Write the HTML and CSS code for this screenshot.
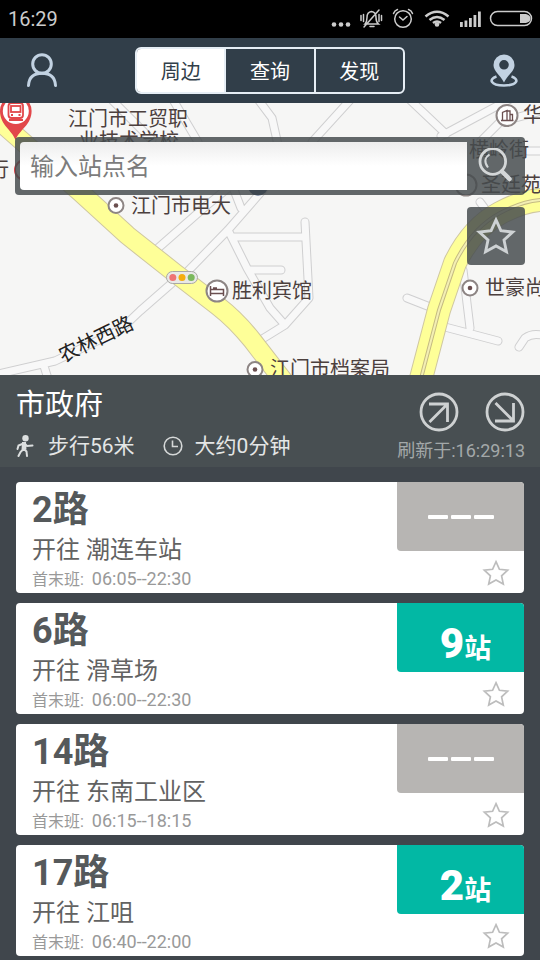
FILE: index.html
```html
<!DOCTYPE html>
<html lang="zh-CN">
<head>
<meta charset="utf-8">
<meta name="viewport" content="width=device-width, initial-scale=1">
<title>市政府</title>
<link rel="stylesheet" href="styles.css">
</head>
<body>
<svg class="defs" aria-hidden="true">
  <symbol id="star" viewBox="0 0 36 36"><path d="M18 3.500 22.400 13.200 33 14.400 25.200 21.600 27.400 32.200 18 27 8.600 32.200 10.800 21.600 3 14.400 13.600 13.200Z" fill="none" stroke="currentColor"/></symbol>
</svg>

<div class="status">
  <span class="clock">16:29</span>
  <svg class="status-icons" viewBox="0 0 204 28" aria-hidden="true">
    <g fill="#ccc">
      <circle cx="4" cy="19.500" r="2.300"/><circle cx="11" cy="19.500" r="2.300"/><circle cx="18" cy="19.500" r="2.300"/>
      <circle cx="107" cy="19.500" r="2.300"/>
      <rect x="130" y="17" width="2.800" height="5"/><rect x="134.500" y="15.500" width="2.800" height="6.500"/><rect x="139" y="13" width="2.800" height="9"/><rect x="143.500" y="10" width="2.800" height="12"/><rect x="148" y="6.500" width="2.800" height="15.500"/>
      <path d="M190 9h6q4.500 1 4.500 4.500t-4.500 4.500h-6z"/>
    </g>
    <g fill="none" stroke="#ccc" stroke-width="1.500" stroke-linecap="round">
      <path d="M35 19q2-2 2-6.500 0-5.500 4.500-6 4.500.5 4.500 6 0 4.500 2.500 6.500zM40 21.500h4M34 22 49 5M31 10.500v5M51.500 10.500v5M33.500 9.500v7M49 9.500v7"/>
      <circle cx="73" cy="14" r="8.300"/><path d="M69.500 12 73 15l4-3.500M63.500 8.500q1-3 4-4M82.500 8.500q-1-3-4-4" />
      <rect x="160.500" y="6.500" width="41" height="14" rx="7"/>
    </g>
    <g fill="none" stroke="#ccc" stroke-width="2.600">
      <path d="M95.500 11.500q11.500-9.500 23 0M99.500 15q7.500-6 15 0M103 18q4-3 8 0"/>
    </g>
  </svg>
</div>

<header class="topbar">
  <button class="icon-button profile" type="button" aria-label="我的">
    <svg viewBox="0 0 36 36" width="36" height="36" fill="none" stroke="#c2d2e2" stroke-width="3" stroke-linecap="round"><circle cx="18" cy="11" r="9.300"/><path d="M4.500 32.500C5 24 10 20.300 18 20.300S31 24 31.500 32.500"/></svg>
  </button>
  <nav class="tabs">
    <button class="tab active" type="button">周边</button>
    <button class="tab" type="button">查询</button>
    <button class="tab" type="button">发现</button>
  </nav>
  <button class="icon-button locate" type="button" aria-label="定位">
    <svg viewBox="0 0 36 36" width="36" height="36"><path fill="#c2d2e2" fill-rule="evenodd" d="M18 1.500a10.500 10.500 0 0 0-10.500 10.500C7.500 18.500 14 21.500 18 29.500c4-8 10.500-11 10.500-17.500A10.500 10.500 0 0 0 18 1.500zm0 5.500a4.800 4.800 0 1 1 0 9.600 4.800 4.800 0 0 1 0-9.600z"/><path d="M10.500 23.500C2.500 26 4 32.500 18 32.500s15.500-6.500 7.500-9" fill="none" stroke="#c2d2e2" stroke-width="2.600"/></svg>
  </button>
</header>

<main>
<section class="map-area">
  <svg class="map" viewBox="0 103 540 272" preserveAspectRatio="xMidYMid slice" role="img" aria-label="地图">
    <defs>
      <g id="streets" fill="none" stroke-linecap="round" stroke-linejoin="round">
        <path d="M110 98 152 140M172 98 198 142M257 98 272 118 278 145M352 98 312 142M408 98 446 134M441 136Q480 115 512 98M480 142 500 122 545 110M528 151H550"/>
        <path d="M157 249 206 206 228 188M234 190 241 208M187 272 228 230 268 184M228 230 247 268 270 308 285 325M250 270H281M232 237H305M305 222 309 298 285 325 259 341"/>
        <path d="M172 283 140 311 120 330 55 361 -10 376M44 366 50 385M407 298 430 307M463 270 470 328M445 327 498 341M519 347 525 338Q533 332 545 336M480 202 492 218"/>
      </g>
      <path id="avenue" fill="none" d="M-10 113 80 192 127 235 175 273 218 306Q236 320 252 340L286 384"/>
      <path id="ring-road" fill="none" d="M418 390 439 310 455 263Q472 228 500 213T550 200"/>
    </defs>
    <rect y="103" width="540" height="272" fill="#f6f6f5"/>
    <g class="street-edge"><use href="#streets"/></g>
    <g class="street-fill"><use href="#streets"/></g>
    <g class="avenue-edge"><use href="#avenue"/></g>
    <g class="avenue-fill"><use href="#avenue"/></g>
    <g class="ring-edge"><use href="#ring-road"/></g>
    <g class="ring-fill"><use href="#ring-road"/></g>
    <g class="ring-mid"><use href="#ring-road"/></g>
    <g class="ring-gap"><use href="#ring-road"/></g>

    <g class="poi">
      <circle cx="116" cy="205.500" r="7.500"/><circle cx="470" cy="288" r="7.500"/><circle cx="255" cy="369.500" r="7.500"/>
      <circle cx="217" cy="291" r="10.500"/><circle cx="507" cy="115.500" r="10.500"/><circle cx="466" cy="185" r="10.500"/>
    </g>
    <g fill="#6b4f50">
      <circle cx="116" cy="205.500" r="2.300"/><circle cx="470" cy="288" r="2.300"/><circle cx="255" cy="369.500" r="2.300"/>
    </g>
    <path d="M210.500 286v10M210.500 293.500h13v2.500M223.500 294v-4.500h-13M213 288h4" fill="none" stroke="#6b4f50" stroke-width="1.500"/>
    <path d="M502.500 120v-7.500l4.500-2V120M507 111h3v9M510 114.500h2.500v5.500M501 120.500h12.500" fill="none" stroke="#6b4f50" stroke-width="1.300"/>
    <circle cx="258" cy="185" r="10.500" fill="#1d3766"/>
    <circle cx="25" cy="170" r="10" fill="#fff" stroke="#d43d45" stroke-width="2"/>
    <g>
      <rect x="166.500" y="271.500" width="31" height="12" rx="6" fill="#e9e9e7" stroke="#aaa9a5"/>
      <circle cx="172.800" cy="277.500" r="3.500" fill="#ef7474"/><circle cx="182" cy="277.500" r="3.500" fill="#f4ae10"/><circle cx="191.200" cy="277.500" r="3.500" fill="#7bb95c"/>
    </g>
    <path d="M15.500 140C12 130 0 125 0 111A15.800 15.800 0 0 1 31.600 111C31.600 125 19 130 15.500 140Z" fill="#e2474a"/>
    <circle cx="15.800" cy="111" r="13" fill="#fff"/>
    <g fill="none" stroke="#e2474a" stroke-width="1.800"><rect x="8.500" y="103" width="14.500" height="15" rx="3"/><rect x="11" y="106" width="9.500" height="6"/><path d="M11 115h2M18.500 115h2M9 120h14"/></g>

    <g class="map-label">
      <text x="68" y="126">江门市工贸职</text>
      <text x="79" y="148">业技术学校</text>
      <text x="131" y="213">江门市电大</text>
      <text x="232" y="298">胜利宾馆</text>
      <text x="270" y="376">江门市档案局</text>
      <text x="485" y="295">世豪尚</text>
      <text x="523" y="122">华</text>
      <text x="469" y="157">横岭街</text>
      <text x="481" y="192">圣廷苑</text>
      <text x="-11" y="177">行</text>
      <text class="road-name" x="63" y="363" transform="rotate(-26 63 363)">农林西路</text>
    </g>
  </svg>
  <div class="map-tools">
    <form class="search">
      <input class="search-input" type="text" placeholder="输入站点名" aria-label="输入站点名">
      <button class="tool" type="button" aria-label="搜索">
        <svg viewBox="0 0 36 36" width="36" height="36" fill="none" stroke="#d4d7d8"><circle cx="14.800" cy="13.500" r="12.800" stroke-width="2.800"/><path d="M24 23.500 31.500 31" stroke-width="4.500" stroke-linecap="round"/><path d="M11.500 6.500Q4 11.500 10 19.500" stroke-width="2"/></svg>
      </button>
    </form>
    <button class="tool favourite" type="button" aria-label="收藏"><svg width="40" height="40"><use href="#star"/></svg></button>
  </div>
</section>

<section class="stop">
  <div class="stop-info">
    <h1>市政府</h1>
    <div class="walk">
      <svg viewBox="0 0 18 22" width="18" height="22" aria-hidden="true"><circle cx="9.500" cy="3.300" r="3.200" fill="#dcdfdf"/><path d="M7.500 8 7 14M7.500 8.500 2.500 10.500 1.500 14M8.500 8.500 11 11 16.500 10.500M7.500 14 4.500 17 2.500 21M8 14 10.500 16.500 11 21" fill="none" stroke="#dcdfdf" stroke-width="2" stroke-linecap="round"/><path d="M6 7h4l.5 7.500H5.500z" fill="#dcdfdf"/></svg>
      <span class="distance">步行56米</span>
      <svg viewBox="0 0 20 20" width="20" height="20" fill="none" stroke="#d5d8d8" stroke-width="1.600" aria-hidden="true"><circle cx="10" cy="10" r="8.800"/><path d="M9.500 4.500V10.500H15"/></svg>
      <span class="time">大约0分钟</span>
    </div>
  </div>
  <div class="stop-side">
    <div class="directions">
      <button class="direction" type="button" aria-label="上行"><svg viewBox="0 0 40 40" width="40" height="40" fill="none" stroke="#ced1d2" stroke-width="2.800"><circle cx="20" cy="20" r="18"/><path d="M10 12h18.500v18M28 12.500 10.500 30"/></svg></button>
      <button class="direction" type="button" aria-label="下行"><svg viewBox="0 0 40 40" width="40" height="40" fill="none" stroke="#ced1d2" stroke-width="2.800"><circle cx="20" cy="20" r="18"/><path d="M10 29h18.500V11M28 28.500 10.500 11"/></svg></button>
    </div>
    <span class="refreshed">刷新于:16:29:13</span>
  </div>
</section>

<ul class="routes">
  <li class="route">
    <div class="route-info"><h2>2路</h2><p class="towards">开往 潮连车站</p><p class="hours"><span>首末班: &nbsp;</span>06:05--22:30</p></div>
    <div class="route-side"><div class="badge idle" role="img" aria-label="暂无车辆"><i></i><i></i><i></i></div><button class="save" type="button" aria-label="收藏"><svg width="28" height="28"><use href="#star"/></svg></button></div>
  </li>
  <li class="route">
    <div class="route-info"><h2>6路</h2><p class="towards">开往 滑草场</p><p class="hours"><span>首末班: &nbsp;</span>06:00--22:30</p></div>
    <div class="route-side"><div class="badge"><b>9</b><span>站</span></div><button class="save" type="button" aria-label="收藏"><svg width="28" height="28"><use href="#star"/></svg></button></div>
  </li>
  <li class="route">
    <div class="route-info"><h2>14路</h2><p class="towards">开往 东南工业区</p><p class="hours"><span>首末班: &nbsp;</span>06:15--18:15</p></div>
    <div class="route-side"><div class="badge idle" role="img" aria-label="暂无车辆"><i></i><i></i><i></i></div><button class="save" type="button" aria-label="收藏"><svg width="28" height="28"><use href="#star"/></svg></button></div>
  </li>
  <li class="route">
    <div class="route-info"><h2>17路</h2><p class="towards">开往 江咀</p><p class="hours"><span>首末班: &nbsp;</span>06:40--22:00</p></div>
    <div class="route-side"><div class="badge"><b>2</b><span>站</span></div><button class="save" type="button" aria-label="收藏"><svg width="28" height="28"><use href="#star"/></svg></button></div>
  </li>
</ul>
</main>
</body>
</html>
```
FILE: styles.css
```css
* { box-sizing: border-box; }

body {
  margin: 0;
  background: #40464c;
  font-family: Roboto, "Noto Sans CJK SC", sans-serif;
  color: #55595b;
}

h1, h2, p, ul { margin: 0; padding: 0; }

svg { display: block; }

button {
  padding: 0;
  border: 0;
  background: none;
  font: inherit;
  color: inherit;
}

.defs { position: absolute; width: 0; height: 0; }

.status {
  display: flex;
  align-items: center;
  justify-content: space-between;
  height: 38px;
  padding: 0 6px 0 8px;
  background: #000;
  color: #ccc;
}

.clock { font-size: 20px; }
.status-icons { width: 204px; height: 28px; }

.topbar {
  display: grid;
  grid-template-columns: 1fr 5fr 1fr;
  column-gap: 20px;
  align-items: center;
  height: 65px;
  padding: 0 18px 0 24px;
  background: #313e49;
}

.locate { justify-self: end; }

/* Keep the tab group centred between the two icons. */
.topbar {
  grid-template-columns: 1fr minmax(0, 270px) 1fr;
  padding: 0 18px;
}

.profile { padding-left: 6px; justify-self: start; }

.tabs {
  display: flex;
  height: 47px;
  border: 2px solid #e6eef5;
  border-radius: 6px;
  overflow: hidden;
}

.tab {
  flex: 1;
  font-size: 20px;
  color: #fff;
}

.tab + .tab { border-left: 2px solid #e6eef5; }
.tab.active { background: #fff; color: #313e49; }

.map-area {
  position: relative;
  height: 272px;
  overflow: hidden;
}

.map {
  position: absolute;
  inset: 0;
  width: 100%;
  height: 100%;
}

.street-edge { stroke: #cfcfd0; stroke-width: 9; }
.street-fill { stroke: #f8f8f8; stroke-width: 7; }
.avenue-edge { stroke: #cfc7a0; stroke-width: 20; }
.avenue-fill { stroke: #feff98; stroke-width: 18; }
.ring-edge { stroke: #cfc7a0; stroke-width: 24; }
.ring-fill { stroke: #feff98; stroke-width: 22; }
.ring-mid { stroke: #c4ba82; stroke-width: 4; }
.ring-gap { stroke: #f3efb4; stroke-width: 2; }
.poi { fill: #fff; stroke: #8d8584; stroke-width: 2; }
.map-label { font-size: 20px; fill: #4c403e; }
.road-name { fill: #222; }

.map-tools {
  position: relative;
  display: flex;
  flex-direction: column;
  align-items: flex-end;
  gap: 12px;
  padding: 34px 15px 0;
}

.search {
  display: flex;
  align-items: center;
  width: 100%;
  height: 58px;
  padding-left: 5px;
  border-radius: 4px;
  background: rgba(69, 75, 78, .84);
}

.search-input {
  flex: 1;
  min-width: 0;
  height: 48px;
  padding: 2px 10px 0;
  border: 0;
  border-radius: 4px 0 0 4px;
  background: linear-gradient(#ededed, #fff 50%);
  font: inherit;
  font-size: 24px;
  color: #444;
}

.search-input::placeholder { color: #7c7c7c; opacity: 1; }

.tool {
  display: grid;
  place-items: center;
  width: 58px;
  height: 58px;
}

.favourite {
  border-radius: 4px;
  background: rgba(69, 75, 78, .84);
  color: #ced2d4;
  stroke-width: 2.6px;
}

.stop {
  display: flex;
  justify-content: space-between;
  height: 92px;
  padding: 9px 15px 0 16px;
  background: #484f52;
  color: #e4e6e6;
}

.stop h1 {
  font-size: 29px;
  font-weight: 400;
  line-height: 42px;
  color: #fff;
}

.walk {
  display: flex;
  align-items: center;
  font-size: 21px;
  line-height: 40px;
}

.distance { margin: 0 28px 0 14px; }
.time { margin-left: 12px; }

.stop-side {
  display: flex;
  flex-direction: column;
  align-items: flex-end;
  padding-top: 8px;
}

.directions { display: flex; gap: 26px; }

.refreshed {
  font-size: 18px;
  line-height: 38px;
  color: #a3a8a9;
}

.routes {
  display: flex;
  flex-direction: column;
  gap: 10px;
  padding: 15px 16px 4px;
  list-style: none;
}

.route {
  display: flex;
  justify-content: space-between;
  height: 111px;
  border-radius: 4px;
  background: #fff;
  overflow: hidden;
}

.route-info { padding: 7px 0 0 16px; }

.route h2 {
  font-size: 36px;
  font-weight: 700;
  line-height: 42px;
}

.towards {
  font-size: 24px;
  line-height: 38px;
  color: #626262;
}

.hours {
  font-size: 18px;
  line-height: 20px;
  color: #999;
}

.hours span { font-size: 16px; }

.route-side {
  display: flex;
  flex-direction: column;
  align-items: flex-end;
  width: 25%;
}

.badge {
  display: flex;
  align-items: baseline;
  justify-content: center;
  width: 100%;
  height: 69px;
  padding: 16px 0 0 10px;
  border-radius: 0 0 0 4px;
  background: #02b8a4;
  color: #fff;
  font-weight: 700;
}

.badge b { font-size: 42px; line-height: 50px; }
.badge span { font-size: 27px; line-height: 50px; }

.badge.idle {
  align-items: center;
  gap: 3px;
  padding: 0;
  background: #b7b5b3;
}

.badge i {
  width: 20px;
  height: 4px;
  border-radius: 1px;
  background: #fff;
}

.save {
  margin: 8px 14px 0 0;
  color: #bdbdbd;
  stroke-width: 2.2px;
}
```
